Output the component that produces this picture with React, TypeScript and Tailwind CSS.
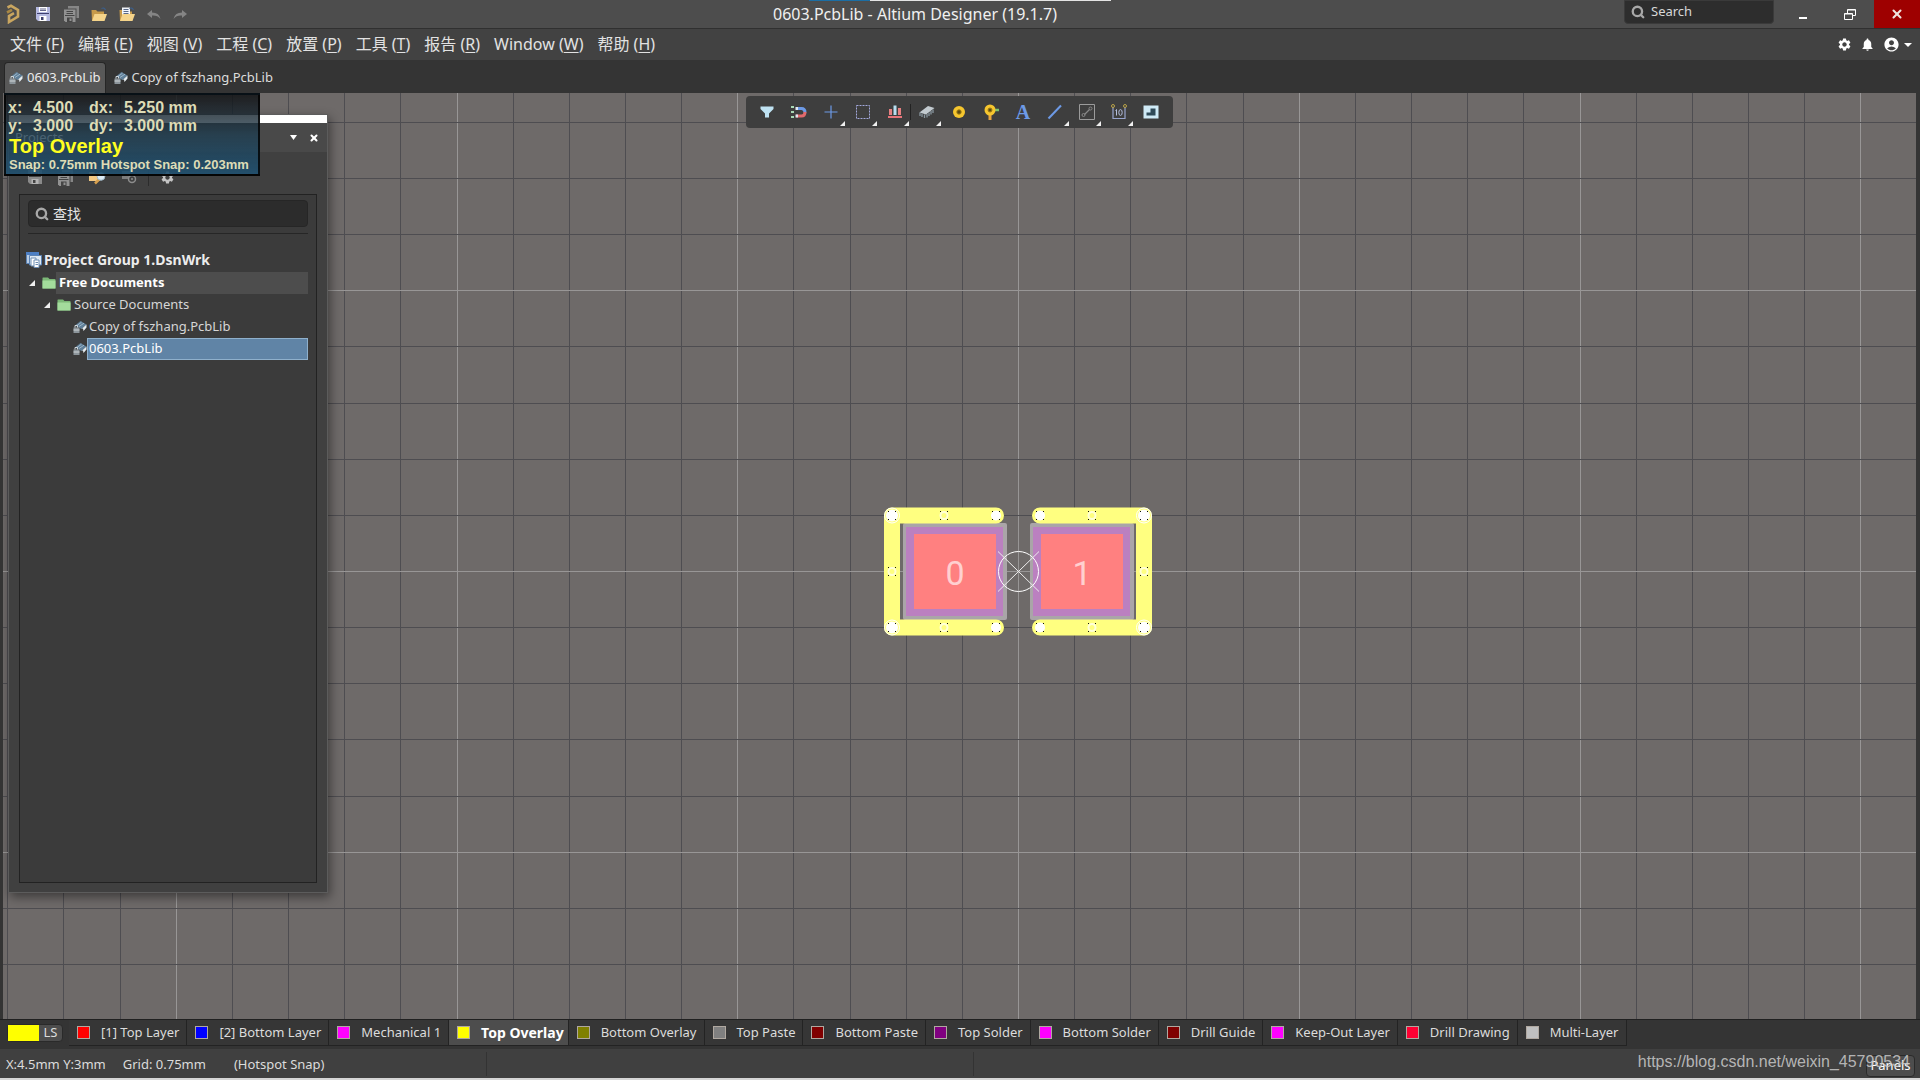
import React from 'react';
import { Search, X } from 'lucide-react';
import { MdAccountCircle, MdNotifications, MdSettings } from 'react-icons/md';

const menus = [
  { label: '文件', accel: 'F' },
  { label: '编辑', accel: 'E' },
  { label: '视图', accel: 'V' },
  { label: '工程', accel: 'C' },
  { label: '放置', accel: 'P' },
  { label: '工具', accel: 'T' },
  { label: '报告', accel: 'R' },
  { label: 'Window', accel: 'W' },
  { label: '帮助', accel: 'H' },
];

const layers = [
  { name: '[1] Top Layer', color: 'bg-[#ff0000]' },
  { name: '[2] Bottom Layer', color: 'bg-[#0000ff]' },
  { name: 'Mechanical 1', color: 'bg-[#ff00ff]' },
  { name: 'Top Overlay', color: 'bg-[#ffff00]', active: true },
  { name: 'Bottom Overlay', color: 'bg-[#808000]' },
  { name: 'Top Paste', color: 'bg-[#808080]' },
  { name: 'Bottom Paste', color: 'bg-[#800000]' },
  { name: 'Top Solder', color: 'bg-[#800080]' },
  { name: 'Bottom Solder', color: 'bg-[#ff00ff]' },
  { name: 'Drill Guide', color: 'bg-[#800000]' },
  { name: 'Keep-Out Layer', color: 'bg-[#ff00ff]' },
  { name: 'Drill Drawing', color: 'bg-[#ff0033]' },
  { name: 'Multi-Layer', color: 'bg-[#c0c0c0]' },
];

/* ---------- Icons ---------- */

const LogoIcon = () => (
  <svg width="14" height="20" viewBox="0 0 14 20" fill="none" stroke="#c9a660" strokeWidth="2.6">
    <path d="M1.5 3.5 L5 1.8 L12 6 V12.5 L3 18 V12 L8 9.2" />
    <path d="M1 8.5 L6 5.8" stroke="#a88743" />
  </svg>
);

const SaveIcon = ({ color = '#b4b8e0', ink = '#3d3f6e', paper = '#ffffff' }: { color?: string; ink?: string; paper?: string }) => (
  <svg width="14" height="14" viewBox="0 0 14 14">
    <path d="M0 0H14V14H2L0 12Z" fill={color} />
    <path d="M3 0H11V5H3Z" fill={paper} />
    <path d="M4 2H10M4 3.5H10" stroke={ink} strokeWidth="0.8" />
    <path d="M1 6.5H13" stroke={ink} />
    <path d="M3.5 9H10.5V14H3.5Z" fill={paper} />
    <path d="M5 10H7.5V13H5Z" fill={ink} />
  </svg>
);

const SaveAllIcon = () => (
  <svg width="15" height="16" viewBox="0 0 15 16">
    <path d="M4 0H15V12H12.5V2.5H4Z" fill="#868686" />
    <path d="M0 3.5H11.5V16H1.5L0 14.5Z" fill="#929292" />
    <path d="M2.5 5.5H9M2.5 7.5H9M1 9.5H10.5" stroke="#454545" />
    <path d="M3 11.5H8.5V16H3Z" fill="#454545" />
    <path d="M5.5 12.5H7.5V15H5.5Z" fill="#929292" />
  </svg>
);

const OpenIcon = ({ doc = false }: { doc?: boolean }) => (
  <svg width="16" height="15" viewBox="0 0 16 15">
    <path d="M0.5 3H5L6.5 4.5H13V14H1Z" fill="#c79a4a" />
    {doc && (
      <>
        <path d="M3 0.5H11V9H3Z" fill="#f2f5fa" />
        <path d="M4.5 2.5H9.5M4.5 4.5H9.5M4.5 6.5H9.5" stroke="#5a6a88" />
      </>
    )}
    <path d="M1 14L3.5 7H16L13.5 14Z" fill="#f5d48a" />
    <path d="M10.5 1.5Q13 0 14.5 3" fill="none" stroke="#3d5e88" strokeWidth="1.2" />
  </svg>
);

const ExploreIcon = () => (
  <svg width="17" height="15" viewBox="0 0 17 15">
    <path d="M0 2H5L6.5 3.5H11V11H0Z" fill="#e9b565" />
    <path d="M0 5.5H11V11H0Z" fill="#f3c983" />
    <path d="M6 13.5L10.5 9" stroke="#d8a04e" strokeWidth="2.5" />
    <circle cx="12" cy="6.5" r="3.8" fill="#dcecf6" stroke="#9fb8c8" />
  </svg>
);

const UndoIcon = ({ flip = false }: { flip?: boolean }) => (
  <svg width="14" height="9" viewBox="0 0 14 9" className={flip ? '-scale-x-100' : ''}>
    <path d="M5 0V2.6Q12 2.6 13.5 9Q10.5 5.2 5 5.6V8L0 4Z" fill="#858585" />
  </svg>
);

const PcbLibIcon = () => (
  <svg width="14" height="14" viewBox="0 0 14 14" className="shrink-0">
    <path d="M2 5.5L7.5 1L13.5 4.5L8.5 9Z" fill="#5f7f99" />
    <path d="M4 5.5L8.5 2.2M6 6.5L11 3.2" stroke="#9db6c8" />
    <path d="M8.5 9L13.5 4.5V7.5L10.5 11L10 8.5Z" fill="#e6edf1" />
    <path d="M0.5 7.5H6.5V13H0.5Z" fill="#8c959b" />
    <path d="M2 7.5V5.5H4.5V7.5M0.5 10H6.5" stroke="#cfd5d8" fill="none" />
  </svg>
);

const FolderIcon = () => (
  <svg width="14" height="12" viewBox="0 0 14 12" className="shrink-0">
    <path d="M1 0.5H6L7.5 2H13Q13.5 2 13.5 3V11.5H0.5V1Q0.5 0.5 1 0.5Z" fill="#7cb877" />
    <path d="M0.5 3.5H13.5V11.5H0.5Z" fill="#a3dc9c" />
  </svg>
);

const GroupIcon = () => (
  <svg width="16" height="16" viewBox="0 0 16 16" className="shrink-0">
    <path d="M0.5 0.5H12.5V11.5H0.5Z" fill="#b9cde4" stroke="#5c83b4" />
    <path d="M0 0H13V3H0Z" fill="#4d7fc4" />
    <path d="M3.5 3.5H15.5V13H3.5Z" fill="#dfe9f3" stroke="#5c83b4" />
    <path d="M5 6H10V14H5Z" fill="#fff" stroke="#6d8db3" />
    <path d="M8 8H13V15.5H8Z" fill="#fff" stroke="#6d8db3" />
    <path d="M9.5 10.5H12M9.5 12.5H12" stroke="#6d8db3" />
  </svg>
);

const ExpandIcon = () => (
  <svg width="6" height="6" viewBox="0 0 6 6" className="shrink-0">
    <path d="M6 0V6H0Z" fill="#f0f0f0" />
  </svg>
);

const icons: Record<string, React.ReactNode> = {
  filter: <path d="M1.5 2.5H14.5V5L10 9.5V13.5H6V9.5L1.5 5Z" fill="#bfe2f2" />,
  magnet: (
    <>
      <path d="M0 3H3M0 8H3M0 13H3" stroke="#a9d7b4" strokeWidth="2" />
      <path d="M5 4.5H10.5Q14 4.5 14 8.5" fill="none" stroke="#6d9ae6" strokeWidth="3" />
      <path d="M5 12H10.5Q14 12 14 8" fill="none" stroke="#e0696c" strokeWidth="3" />
      <path d="M4.5 3H7V6H4.5ZM4.5 10.5H7V13.5H4.5Z" fill="#dfe6ef" />
    </>
  ),
  cross: <path d="M8 1.5V14.5M1.5 8H14.5" stroke="#6d9ae6" strokeWidth="1.2" />,
  select: <path d="M1.5 1.5H14.5V14.5H1.5Z" fill="none" stroke="#a3a8dc" strokeDasharray="2 1" />,
  align: (
    <>
      <path d="M3.5 5V11M12.5 4V11" stroke="#e77f80" strokeWidth="3" />
      <path d="M8 1.5V11" stroke="#b8def0" strokeWidth="3" />
      <path d="M1 13H15" stroke="#e8747a" strokeWidth="2" />
    </>
  ),
  chip: (
    <>
      <path d="M0.5 8.5L9 2L15.5 4L7 10.5Z" fill="#c3cbd0" />
      <path d="M1 8.5V12M3 9.5V13M5.5 10.5V14M8 10V13.5M10 8.5V12M12 7V10.5M14 5.5V9" stroke="#8997a0" strokeWidth="1.3" />
    </>
  ),
  pad: (
    <>
      <circle cx="8" cy="8" r="6" fill="#f6c62e" />
      <circle cx="8" cy="8" r="2.2" fill="#5b4a12" stroke="#a07d14" />
    </>
  ),
  via: (
    <>
      <path d="M7 8V16" stroke="#e9a63c" strokeWidth="3" />
      <path d="M9 6H16" stroke="#7ec26b" strokeWidth="2.5" />
      <circle cx="7" cy="6" r="5.5" fill="#f6c62e" />
      <circle cx="7" cy="6" r="2" fill="#5b4a12" stroke="#a07d14" />
    </>
  ),
  line: <path d="M1.5 14.5L14 1.5" stroke="#6d9ae6" strokeWidth="2" />,
  room: (
    <>
      <path d="M0.5 0.5H15.5V15.5H0.5Z" fill="none" stroke="#9b9b9b" />
      <path d="M5.5 10.5L10.5 5.5" stroke="#888" strokeWidth="1.3" />
      <circle cx="4.5" cy="11" r="1.5" fill="none" stroke="#888" />
      <circle cx="11.5" cy="4.5" r="1.5" fill="none" stroke="#888" />
    </>
  ),
  dimension: (
    <>
      <path d="M2 3V14.5H14V3" fill="none" stroke="#98a5ce" strokeWidth="1.2" />
      <circle cx="2" cy="2" r="1.5" fill="none" stroke="#b9a24a" />
      <circle cx="14" cy="2" r="1.5" fill="none" stroke="#b9a24a" />
      <path d="M5.5 5.5V11.5M4.5 6.5L5.5 5.5" stroke="#b5c0e0" fill="none" />
      <ellipse cx="9.5" cy="8.5" rx="1.7" ry="2.9" stroke="#b5c0e0" fill="none" />
    </>
  ),
  region: (
    <>
      <path d="M0.5 1.5H15.5V14.5H0.5Z" fill="#cfeaf6" />
      <path d="M7.5 4.5H12.5V11.5H3.5V8.5H7.5Z" fill="#2f4a58" />
    </>
  ),
};

const tools = [
  { id: 'filter', name: 'Filter' },
  { id: 'magnet', name: 'Snapping' },
  { id: 'cross', name: 'Move', more: true },
  { id: 'select', name: 'Select', more: true },
  { id: 'align', name: 'Align', more: true, divider: true },
  { id: 'chip', name: 'Component', more: true },
  { id: 'pad', name: 'Pad' },
  { id: 'via', name: 'Via' },
  { id: 'text', name: 'String' },
  { id: 'line', name: 'Line', more: true },
  { id: 'room', name: 'Room', more: true },
  { id: 'dimension', name: 'Dimension', more: true },
  { id: 'region', name: 'Region' },
];

/* ---------- Top bars ---------- */

const TitleBar: React.FC = () => (
  <header className="relative flex h-[29px] items-center border-b border-[#303030] bg-[#4d4d4d]">
    <div className="flex flex-1 items-center gap-3 pl-1.5">
      <LogoIcon />
      <button aria-label="Save" className="ml-1"><SaveIcon /></button>
      <button aria-label="Save all" className="ml-0.5"><SaveAllIcon /></button>
      <button aria-label="Open"><OpenIcon /></button>
      <button aria-label="Open project"><OpenIcon doc /></button>
      <button aria-label="Undo"><UndoIcon /></button>
      <button aria-label="Redo"><UndoIcon flip /></button>
    </div>
    <h1 className="pr-24 text-base text-[#f0f0f0]">0603.PcbLib - Altium Designer (19.1.7)</h1>
    <div className="flex h-full flex-1 items-start justify-end">
      <label className="mr-1.5 flex h-6 w-[150px] items-center gap-1.5 rounded-b border border-[#3a3a3a] bg-[#2d2d2d] px-1.5">
        <Search size={14} strokeWidth={4} className="shrink-0 text-[#a8a8a8]" />
        <input aria-label="Search" placeholder="Search" className="w-full bg-transparent text-[13px] text-white outline-none placeholder:text-[#d8d8d8]" />
      </label>
      <button aria-label="Minimize" className="flex h-7 w-[46px] items-center justify-center">
        <span className="mt-2 h-0.5 w-2 bg-white" />
      </button>
      <button aria-label="Restore" className="flex h-7 w-12 items-center justify-center">
        <svg width="12" height="11" viewBox="0 0 12 11" fill="none" stroke="#fff">
          <path d="M3.5 4V0.5H11.5V6.5H8.5M3.5 1H11.5" />
          <path d="M0.5 4.5H8.5V10.5H0.5ZM0.5 5H8.5" />
        </svg>
      </button>
      <button aria-label="Close" className="flex h-7 w-[46px] items-center justify-center bg-[#9e0000] text-[#f0e4e0]">
        <X size={14} strokeWidth={3.5} />
      </button>
    </div>
    <div className="absolute inset-x-0 top-0 flex justify-center">
      <div className="h-px w-[61px] bg-[#1c6ea4]" />
      <div className="h-px w-[241px] bg-[#e4e4e4]" />
    </div>
  </header>
);

const MenuBar: React.FC = () => (
  <nav className="flex h-[31px] items-center justify-between bg-[#424242] pr-2 pl-2.5">
    <div className="flex gap-3.5">
      {menus.map((m) => (
        <button key={m.accel} className="pb-0.5 text-base leading-6 text-[#e2e2e2]">
          {m.label} (<span className="underline underline-offset-2">{m.accel}</span>)
        </button>
      ))}
    </div>
    <div className="flex items-center gap-2 text-white">
      <button aria-label="Preferences"><MdSettings size={15} /></button>
      <button aria-label="Notifications"><MdNotifications size={15} /></button>
      <button aria-label="Account" className="flex items-center gap-1">
        <MdAccountCircle size={17} />
        <svg width="8" height="4" viewBox="0 0 8 4"><path d="M0 0H8L4 4Z" fill="#fff" /></svg>
      </button>
    </div>
  </nav>
);

const DocumentTabs: React.FC = () => (
  <div className="flex h-[33px] items-end bg-[#343434] pl-1 text-[13px] text-[#dcdcdc]">
    <button className="flex h-[31px] items-center gap-1 rounded-t-sm border border-b-0 border-[#262626] bg-[#585858] px-1 text-[#ececec]">
      <PcbLibIcon />
      0603.PcbLib
    </button>
    <button className="flex h-[31px] items-center gap-1 px-2">
      <PcbLibIcon />
      Copy of fszhang.PcbLib
    </button>
  </div>
);

/* ---------- Editor ---------- */

const MINOR = 56.15;
const ORIGIN = { x: 1015, y: 478 };

const gridLines = (origin: number, length: number) => {
  const lines: { at: number; major: boolean }[] = [];
  for (let k = -Math.floor(origin / MINOR); origin + k * MINOR < length; k++) {
    lines.push({ at: Math.round(origin + k * MINOR) + 0.5, major: k % 5 === 0 });
  }
  // major lines go last so they stay on top at the crossings
  return lines.sort((a, b) => Number(a.major) - Number(b.major));
};

const handles = [
  [-126, -56], [-74, -56], [-22, -56], [-126, 0], [-126, 56], [-74, 56], [-22, 56],
  [22, -56], [74, -56], [126, -56], [126, 0], [22, 56], [74, 56], [126, 56],
];

const Footprint: React.FC = () => (
  <g transform={`translate(${ORIGIN.x} ${ORIGIN.y})`}>
    {[-115, 12].map((x, i) => (
      <g key={x}>
        <rect x={x} y={-48} width={104} height={97} rx={2} fill="#aaa5a8" />
        <rect x={x + 3} y={-44} width={97} height={89} fill="#bb80c0" />
        <rect x={x + 11} y={-37} width={82} height={75} fill="#ff8080" />
        <text x={x + 52} y={14} textAnchor="middle" fontSize="34" fill="#ffd0d0" className="font-['Roboto',sans-serif]">
          {i}
        </text>
      </g>
    ))}
    <g transform="translate(0 0.5)">
      <path
        d="M-22 -56H-126V56H-22M22 -56H126V56H22"
        fill="none"
        stroke="#ffff80"
        strokeWidth="16"
        strokeLinecap="round"
        strokeLinejoin="round"
      />
      {handles.map(([x, y]) => {
        const end = y !== 0 && Math.abs(x) !== 74;
        const corner = end && Math.abs(x) === 126;
        return (
          <g key={`${x},${y}`}>
            {corner && <circle cx={x} cy={y} r="7.5" fill="none" stroke="#fff" />}
            {end && <circle cx={x} cy={y} r={corner ? 6 : 5} fill="#fff" />}
            {!end && <circle cx={x} cy={y} r="3.5" fill="none" stroke="#ffffd8" strokeWidth="2" />}
            <path d={`M${x - 4} ${y - 4}h1m6 0h1M${x - 4} ${y + 4}h1m6 0h1`} stroke="#111" />
          </g>
        );
      })}
      <circle cx="0.5" cy="0" r="20" fill="none" stroke="#fff" />
      <path d="M-20 -20L21 20M21 -20L-20 20" stroke="#eee" />
    </g>
  </g>
);

const Workspace: React.FC = () => (
  <svg className="absolute inset-0 h-full w-full" aria-label="PCB workspace">
    {gridLines(ORIGIN.x, 3840).map((l) => (
      <path key={`v${l.at}`} d={`M${l.at} 0V2160`} stroke={l.major ? '#989696' : '#4e4d51'} />
    ))}
    {gridLines(ORIGIN.y, 2160).map((l) => (
      <path key={`h${l.at}`} d={`M0 ${l.at}H3840`} stroke={l.major ? '#989696' : '#4e4d51'} />
    ))}
    <Footprint />
  </svg>
);

const Toolbar: React.FC = () => (
  <div className="relative mt-[3px] flex h-8 rounded bg-[#3e3e3e] pr-1.5 pl-[5px]">
    {tools.map((t) => (
      <button key={t.id} aria-label={t.name} className="relative flex w-8 items-center justify-center">
        {t.id === 'text' ? (
          <span className="font-['Liberation_Serif',serif] text-xl leading-none font-bold text-[#6d9ae6]">A</span>
        ) : (
          <svg width="16" height="16" viewBox="0 0 16 16">{icons[t.id]}</svg>
        )}
        {t.more && (
          <svg width="5" height="5" viewBox="0 0 5 5" className="absolute right-0.5 bottom-0.5">
            <path d="M5 0V5H0Z" fill="#f0f0f0" />
          </svg>
        )}
        {t.divider && <span className="absolute top-2 right-0 h-4 w-px bg-[#222]" />}
      </button>
    ))}
  </div>
);

const ProjectsPanel: React.FC = () => (
  <aside className="absolute top-[21px] bottom-[126px] left-[5px] flex w-80 flex-col border border-[#5c5c5c] bg-[#404040] shadow-[2px_4px_10px_rgba(0,0,0,0.45)]">
    <div className="h-2 shrink-0 bg-white" />
    <div className="flex h-[29px] shrink-0 items-center justify-between bg-[#494949] pr-2 pl-1.5 text-[13px] text-[#d8d8d8]">
      <h2>Projects</h2>
      <div className="flex items-center gap-3">
        <button aria-label="Panel menu">
          <svg width="7" height="5" viewBox="0 0 7 5"><path d="M0 0H7L3.5 5Z" fill="#fff" /></svg>
        </button>
        <button aria-label="Close panel" className="text-white"><X size={10} strokeWidth={5} /></button>
      </div>
    </div>
    <div className="flex h-[42px] shrink-0 items-start gap-4 pt-[18px] pl-[19px]">
      <button aria-label="Save"><SaveIcon color="#8a8a8a" ink="#444" paper="#b4b4b4" /></button>
      <button aria-label="Save all"><SaveAllIcon /></button>
      <button aria-label="Explore"><ExploreIcon /></button>
      <button aria-label="Project options">
        <svg width="15" height="14" viewBox="0 0 15 14">
          <path d="M0 1H8V9H0Z" fill="#7d7d7d" />
          <circle cx="10" cy="9" r="3.5" fill="#404040" stroke="#8c8c8c" strokeWidth="1.5" />
          <circle cx="10" cy="9" r="1" fill="#8c8c8c" />
        </svg>
      </button>
      <div className="-mx-[5px] h-4 w-px bg-[#2c2c2c]" />
      <button aria-label="Settings" className="text-[#c4c4c4]"><MdSettings size={15} /></button>
    </div>
    <div className="mx-2.5 mb-[9px] flex-1 border border-[#222] bg-[#3b3b3b] px-2 pt-[5px]">
      <label className="flex h-[27px] items-center gap-1 rounded border border-[#262626] bg-[#2c2c2c] px-1.5">
        <Search size={14} strokeWidth={4} className="shrink-0 text-[#a8a8a8]" />
        <input aria-label="查找" placeholder="查找" className="w-full bg-transparent text-sm text-white outline-none placeholder:text-[#e4e4e4]" />
      </label>
      <div className="mt-1.5 mb-4 h-px bg-[#262626]" />
      <ul className="text-[13px] text-[#d6d6d6]">
        <li className="-ml-0.5 flex h-[22px] items-center gap-0.5 pb-0.5 text-sm font-bold text-[#ececec]">
          <GroupIcon />
          Project Group 1.DsnWrk
        </li>
        <li className="flex h-[22px] items-center gap-[7px] pl-px font-bold text-white">
          <ExpandIcon />
          <div className="flex h-full flex-1 items-center">
            <FolderIcon />
            <span className="flex h-full flex-1 items-center bg-[#4d4d4d] pl-[3px]">Free Documents</span>
          </div>
        </li>
        <li className="flex h-[22px] items-center gap-[7px] pl-4">
          <ExpandIcon />
          <div className="flex items-center gap-[3px]">
            <FolderIcon />
            Source Documents
          </div>
        </li>
        <li className="flex h-[22px] items-center gap-0.5 pl-[45px]">
          <PcbLibIcon />
          Copy of fszhang.PcbLib
        </li>
        <li className="flex h-[22px] items-center pl-[45px]">
          <PcbLibIcon />
          <span className="flex h-[22px] flex-1 items-center border border-[#8fb0cc] bg-[#6084a6] pl-px text-white">0603.PcbLib</span>
        </li>
      </ul>
    </div>
  </aside>
);

const HeadsUp: React.FC = () => (
  <div className="absolute top-0 left-px h-[83px] w-64 border-2 border-black/80 bg-linear-to-b from-[#101214]/85 via-[#1c3c50]/75 to-[#1f5070]/90 px-0.5 pt-1 font-['Liberation_Sans',sans-serif] font-bold text-[#dedcb6]">
    <div className="grid w-fit grid-cols-[25px_56px_35px_auto] text-base leading-[18px]">
      <span>x:</span><span>4.500</span><span>dx:</span><span>5.250 mm</span>
      <span>y:</span><span>3.000</span><span>dy:</span><span>3.000 mm</span>
    </div>
    <p className="pl-px text-xl leading-[22px] text-[#ffff20]">Top Overlay</p>
    <p className="pl-px text-[13px] leading-[15px] whitespace-nowrap">Snap: 0.75mm Hotspot Snap: 0.203mm</p>
  </div>
);

/* ---------- Bottom bars ---------- */

const LayerBar: React.FC = () => (
  <div className="flex h-[30px] items-start border-t border-[#202020] bg-[#343434] text-[13px] text-[#dcdcdc]">
    <button className="mt-1 mr-1.5 ml-[7px] flex h-[18px] w-14 items-center rounded-sm border border-[#2a2a2a] bg-[#4d4d4d]">
      <span className="h-full w-[31px] bg-[#ffff00]" />
      <span className="flex-1 text-center">LS</span>
    </button>
    {layers.map((l) => (
      <button
        key={l.name}
        className={`flex h-[26px] items-center gap-[11px] border-r border-b border-[#232323] pl-2 whitespace-nowrap ${l.active ? 'bg-[#4d4d4d] pr-1 text-sm font-bold text-white' : 'bg-[#363636] pr-[7px]'}`}
      >
        <span className={`h-[13px] w-[13px] border border-[#b0a8a0] ${l.color}`} />
        {l.name}
      </button>
    ))}
  </div>
);

const StatusBar: React.FC = () => (
  <footer className="relative flex h-[31px] items-center border-b-2 border-[#d6d6d6] bg-[#404040] text-[13px] text-[#dcdcdc]">
    <div className="flex h-6 w-[487px] items-center border-r border-[#333] pt-0.5 pl-1.5">
      <span>X:4.5mm Y:3mm</span>
      <span className="ml-[17px]">Grid: 0.75mm</span>
      <span className="ml-7">(Hotspot Snap)</span>
    </div>
    <div className="h-6 w-[487px] border-r border-[#333]" />
    <div className="flex flex-1 items-center justify-end pr-[5px]">
      <button className="mt-1 h-[22px] w-[49px] rounded border border-[#2a2a2a] bg-[#4d4d4d] text-white">Panels</button>
    </div>
    <span className="absolute right-2.5 bottom-1 font-['Liberation_Sans',sans-serif] text-base text-[#c4c4c4]/90">
      https://blog.csdn.net/weixin_45790534
    </span>
  </footer>
);

const App: React.FC = () => (
  <div className="flex h-screen flex-col overflow-hidden bg-[#343434] font-['Noto_Sans','Noto_Sans_CJK_SC',sans-serif]">
    <TitleBar />
    <MenuBar />
    <DocumentTabs />
    <main className="relative mr-1 ml-[3px] flex flex-1 items-start justify-center overflow-hidden bg-[#6e6a69]">
      <Workspace />
      <Toolbar />
      <ProjectsPanel />
      <HeadsUp />
    </main>
    <LayerBar />
    <StatusBar />
  </div>
);

export default App;
